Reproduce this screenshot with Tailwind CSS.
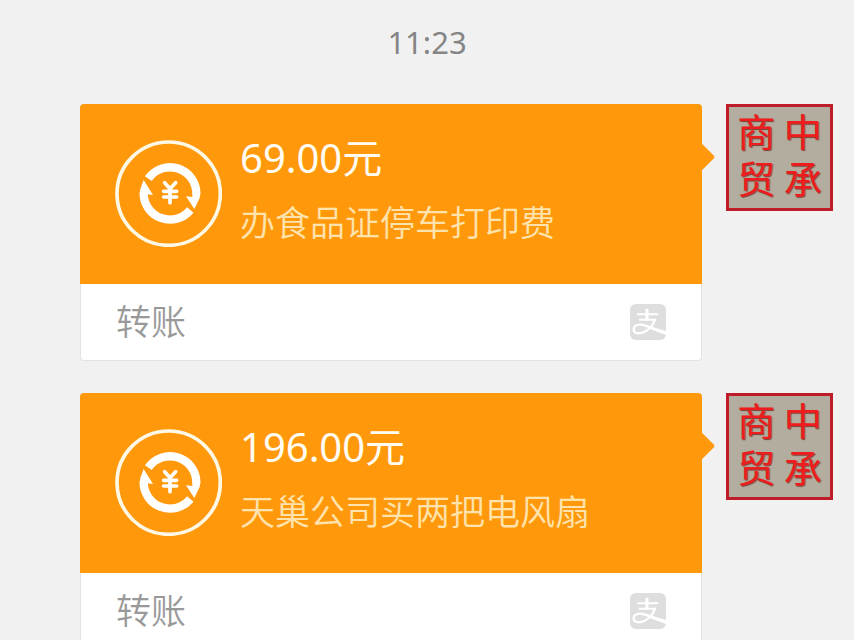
<!DOCTYPE html>
<html lang="zh-CN">
<head>
<meta charset="utf-8">
<meta name="viewport" content="width=device-width, initial-scale=1">
<title>转账</title>
<script src="https://cdn.jsdelivr.net/npm/@tailwindcss/browser@4"></script>
</head>
<body class="min-h-screen bg-[#f1f1f1] font-['Noto_Sans','Noto_Sans_CJK_SC',sans-serif]">
<svg class="hidden" aria-hidden="true">
  <symbol id="transfer" viewBox="45 45 321 321">
    <circle cx="206" cy="206" r="155" fill="none" stroke="#fff8e4" stroke-width="11"/>
    <g fill="none" stroke="#fff" stroke-width="25">
      <path d="M145 161A79 79 0 0 1 289 208"/>
      <path d="M271 255A79 79 0 0 1 131 203"/>
    </g>
    <path fill="#fff" d="M301 203L299 219L283 252L258 214L277 216L277 203ZM119 207L121 192L131 165L159 210L143 208L143 212Z"/>
    <path fill="none" stroke="#fff" stroke-width="11" stroke-linecap="round" d="M194 173L210 191L227 173M210 191V233M191 199H230M191 216H230"/>
  </symbol>
  <symbol id="alipay" viewBox="60 41 108 108">
    <rect x="60" y="41" width="108" height="108" rx="17" fill="#dedede"/>
    <g fill="none" stroke="#fff" stroke-linecap="round" stroke-linejoin="round">
      <path stroke-width="6" d="M84 72H142M89 88H135"/>
      <path stroke-width="9" d="M111 59V87"/>
      <path stroke-width="7" d="M135 88C129 106 114 122 97 127C80 132 70 126 71 116C72 105 85 101 99 104C112 107 127 114 145 121"/>
    </g>
    <path fill="#fff" d="M124 109L168 122V134L160 131L120 116Z"/>
  </symbol>
</svg>
<main class="flex flex-col pr-[21px] pl-20">
  <time class="mt-5 -ml-20 -mr-[21px] text-center text-[31px] leading-[44px] text-[#858585]">11:23</time>

  <article class="mt-10 flex items-start gap-6">
    <a href="#" class="relative block min-w-0 flex-1">
      <span class="absolute top-[43px] right-[-9px] size-5 rotate-45 rounded-[2px] bg-[#ff980b]"></span>
      <span class="relative flex h-[180px] items-start gap-[18px] rounded-t bg-[#ff980b] px-[35px] pt-9">
        <svg class="size-[107px] shrink-0" aria-hidden="true"><use href="#transfer"/></svg>
        <span class="flex flex-col whitespace-nowrap">
          <span class="h-9 text-[40px] leading-9 text-[#fffdf3]">69.00元</span>
          <span class="mt-[25px] text-[35px] leading-[44px] font-[350] text-[#ffe3ac]">办食品证停车打印费</span>
        </span>
      </span>
      <span class="flex h-[77px] items-center justify-between rounded-b border border-t-0 border-[#e2e2e2] bg-white px-[35px] text-[35px] leading-[44px] font-[350] text-[#999]">
        转账
        <svg class="size-9" aria-hidden="true"><use href="#alipay"/></svg>
      </span>
    </a>
    <div class="grid size-[107px] shrink-0 grid-cols-2 place-items-center border-3 border-[#bd1c28] bg-[#b3ad9f] px-1 pb-2 font-['Noto_Sans_CJK_SC',sans-serif] text-[38px] leading-[44px] text-[#ee1c1c] [text-shadow:1px_1px_1px_#7a4038]"><span>商</span><span>中</span><span>贸</span><span>承</span></div>
  </article>

  <article class="mt-8 flex items-start gap-6">
    <a href="#" class="relative block min-w-0 flex-1">
      <span class="absolute top-[43px] right-[-9px] size-5 rotate-45 rounded-[2px] bg-[#ff980b]"></span>
      <span class="relative flex h-[180px] items-start gap-[18px] rounded-t bg-[#ff980b] px-[35px] pt-9">
        <svg class="size-[107px] shrink-0" aria-hidden="true"><use href="#transfer"/></svg>
        <span class="flex flex-col whitespace-nowrap">
          <span class="h-9 text-[40px] leading-9 text-[#fffdf3]">196.00元</span>
          <span class="mt-[25px] text-[35px] leading-[44px] font-[350] text-[#ffe3ac]">天巢公司买两把电风扇</span>
        </span>
      </span>
      <span class="flex h-[77px] items-center justify-between rounded-b border border-t-0 border-[#e2e2e2] bg-white px-[35px] text-[35px] leading-[44px] font-[350] text-[#999]">
        转账
        <svg class="size-9" aria-hidden="true"><use href="#alipay"/></svg>
      </span>
    </a>
    <div class="grid size-[107px] shrink-0 grid-cols-2 place-items-center border-3 border-[#bd1c28] bg-[#b3ad9f] px-1 pb-2 font-['Noto_Sans_CJK_SC',sans-serif] text-[38px] leading-[44px] text-[#ee1c1c] [text-shadow:1px_1px_1px_#7a4038]"><span>商</span><span>中</span><span>贸</span><span>承</span></div>
  </article>
</main>
</body>
</html>
